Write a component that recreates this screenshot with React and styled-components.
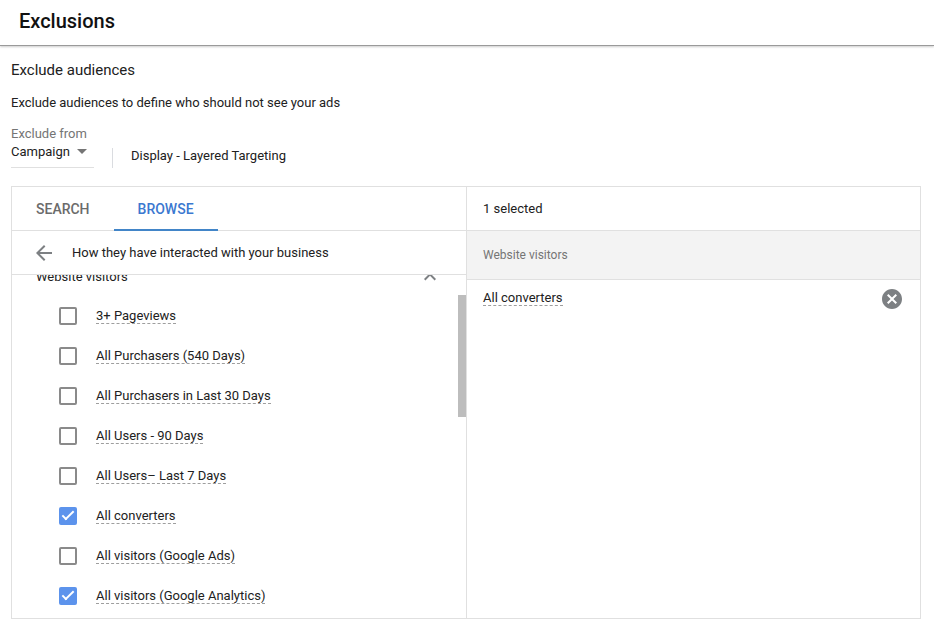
import React, { useLayoutEffect, useRef, useState } from "react";
import styled, { createGlobalStyle } from "styled-components";

const audienceList = [
  { id: "pageviews", name: "3+ Pageviews" },
  { id: "purchasers540", name: "All Purchasers (540 Days)" },
  { id: "purchasers30", name: "All Purchasers in Last 30 Days" },
  { id: "users90", name: "All Users - 90 Days" },
  { id: "users7", name: "All Users– Last 7 Days" },
  { id: "converters", name: "All converters" },
  { id: "visitorsAds", name: "All visitors (Google Ads)" },
  { id: "visitorsAnalytics", name: "All visitors (Google Analytics)" },
];

const App = () => {
  const [tab, setTab] = useState("browse");
  const [level, setLevel] = useState("Campaign");
  const [checked, setChecked] = useState(["converters", "visitorsAnalytics"]);
  const [selected, setSelected] = useState(["All converters"]);
  const listRef = useRef(null);

  // start with the group title partly scrolled under the header
  useLayoutEffect(() => {
    listRef.current.scrollTop = 19;
  }, []);

  const onToggle = (id) => {
    setChecked((prev) =>
      prev.includes(id) ? prev.filter((item) => item !== id) : [...prev, id]
    );
  };

  return (
    <>
      <GlobalStyle />
      <Header>
        <Title>Exclusions</Title>
      </Header>
      <Main>
        <SubTitle>Exclude audiences</SubTitle>
        <Description>
          Exclude audiences to define who should not see your ads
        </Description>

        <FieldLabel htmlFor="level">Exclude from</FieldLabel>
        <FieldRow>
          <SelectBox>
            <Select
              id="level"
              value={level}
              onChange={(e) => setLevel(e.target.value)}
            >
              <option>Campaign</option>
              <option>Ad group</option>
            </Select>
            <SelectArrow viewBox="0 0 10 5" aria-hidden="true">
              <path d="M0 0h10L5 5z" />
            </SelectArrow>
          </SelectBox>
          <CampaignName>Display - Layered Targeting</CampaignName>
        </FieldRow>

        <Picker>
          <BrowsePane>
            <Tabs role="tablist">
              <Tab
                type="button"
                role="tab"
                aria-selected={tab === "search"}
                $active={tab === "search"}
                onClick={() => setTab("search")}
              >
                SEARCH
              </Tab>
              <Tab
                type="button"
                role="tab"
                aria-selected={tab === "browse"}
                $active={tab === "browse"}
                onClick={() => setTab("browse")}
              >
                BROWSE
              </Tab>
            </Tabs>
            <Breadcrumb>
              <IconButton type="button" aria-label="Back">
                <Icon viewBox="0 0 24 24">
                  <path d="M20 11H7.83l5.59-5.59L12 4l-8 8 8 8 1.41-1.41L7.83 13H20v-2z" />
                </Icon>
              </IconButton>
              How they have interacted with your business
            </Breadcrumb>
            <ListArea>
              <List ref={listRef}>
                <GroupTitle>
                  Website visitors
                  <IconButton type="button" aria-label="Collapse">
                    <Icon viewBox="0 0 24 24">
                      <path d="M12 8l-6 6 1.41 1.41L12 10.83l4.59 4.58L18 14z" />
                    </Icon>
                  </IconButton>
                </GroupTitle>
                {audienceList.map((item) => (
                  <AudienceRow key={item.id}>
                    <Checkbox
                      type="checkbox"
                      checked={checked.includes(item.id)}
                      onChange={() => onToggle(item.id)}
                    />
                    <AudienceName>{item.name}</AudienceName>
                  </AudienceRow>
                ))}
              </List>
              <ScrollTrack>
                <ScrollThumb />
              </ScrollTrack>
            </ListArea>
          </BrowsePane>

          <SelectedPane>
            <SelectedCount>{selected.length} selected</SelectedCount>
            <SelectedGroup>Website visitors</SelectedGroup>
            {selected.map((name) => (
              <SelectedRow key={name}>
                <AudienceName>{name}</AudienceName>
                <IconButton
                  type="button"
                  aria-label={`Remove ${name}`}
                  onClick={() =>
                    setSelected(selected.filter((item) => item !== name))
                  }
                >
                  <Icon viewBox="0 0 24 24">
                    <path d="M12 2C6.47 2 2 6.47 2 12s4.47 10 10 10 10-4.47 10-10S17.53 2 12 2zm5 13.59L15.59 17 12 13.41 8.41 17 7 15.59 10.59 12 7 8.41 8.41 7 12 10.59 15.59 7 17 8.41 13.41 12 17 15.59z" />
                  </Icon>
                </IconButton>
              </SelectedRow>
            ))}
          </SelectedPane>
        </Picker>
      </Main>
    </>
  );
};

export default App;

const GlobalStyle = createGlobalStyle`
  * {
    box-sizing: border-box;
  }

  body {
    margin: 0;
    background-color: #fff;
    color: #212121;
    font-family: Roboto, "Liberation Sans", sans-serif;
    font-size: 13px;
    line-height: 16px;
  }

  button,
  select,
  input {
    margin: 0;
    font-family: inherit;
  }
`;

const Header = styled.header`
  height: 46px;
  padding: 9px 19px;
  border-bottom: 1px solid #9a9a9a;
  box-shadow: 0 1px 2px rgba(0, 0, 0, 0.2);
`;

const Title = styled.h1`
  margin: 0;
  color: #111;
  font-size: 20px;
  font-weight: 500;
  line-height: 24px;
`;

const Main = styled.main`
  padding: 16px 13px 12px 11px;
`;

const SubTitle = styled.h2`
  margin: 0 0 17px;
  font-size: 15px;
  font-weight: 400;
  line-height: 16px;
`;

const Description = styled.p`
  margin: 0 0 15px;
`;

const FieldLabel = styled.label`
  display: block;
  color: #757575;
`;

const FieldRow = styled.div`
  display: flex;
  align-items: flex-end;
  gap: 18px;
  margin-bottom: 18px;
`;

const SelectBox = styled.div`
  display: grid;
  align-items: center;
  width: 83px;
  height: 26px;
  padding-bottom: 6px;
  border-bottom: 1px solid #e0e0e0;
`;

const Select = styled.select`
  grid-area: 1 / 1;
  appearance: none;
  width: 100%;
  height: 18px;
  padding: 0;
  border: none;
  background: transparent;
  color: inherit;
  font-size: 13px;
`;

const SelectArrow = styled.svg`
  grid-area: 1 / 1;
  justify-self: end;
  width: 10px;
  height: 5px;
  margin-right: 7px;
  fill: #757575;
  pointer-events: none;
`;

const CampaignName = styled.div`
  height: 20px;
  padding-left: 18px;
  border-left: 1px solid #dadce0;
`;

const Picker = styled.section`
  display: grid;
  grid-template-columns: 1fr 1fr;
  border: 1px solid #e0e0e0;
`;

const BrowsePane = styled.div`
  min-width: 0;
`;

const Tabs = styled.div`
  display: flex;
  height: 44px;
  border-bottom: 1px solid #e0e0e0;
`;

const Tab = styled.button`
  height: 44px;
  padding: 2px 24px 0;
  border: none;
  border-bottom: 2px solid ${({ $active }) => ($active ? "#4285c8" : "transparent")};
  background: transparent;
  color: ${({ $active }) => ($active ? "#3b78d0" : "#6b6b6b")};
  font-size: 14px;
  font-weight: 500;
  cursor: pointer;
`;

const Breadcrumb = styled.div`
  display: flex;
  align-items: center;
  gap: 16px;
  height: 44px;
  padding-left: 20px;
  border-bottom: 1px solid #e0e0e0;
`;

const IconButton = styled.button`
  display: flex;
  padding: 0;
  border: none;
  background: transparent;
  color: #7d8083;
  cursor: pointer;
`;

const Icon = styled.svg`
  width: 24px;
  height: 24px;
  fill: currentColor;
`;

const ListArea = styled.div`
  display: flex;
  height: 343px;
`;

const List = styled.div`
  flex: 1;
  padding-bottom: 2px;
  overflow-y: auto;
  scrollbar-width: none;
`;

const GroupTitle = styled.div`
  display: flex;
  align-items: center;
  justify-content: space-between;
  height: 40px;
  padding: 2px 16px 0 24px;
`;

const AudienceRow = styled.label`
  display: flex;
  align-items: center;
  gap: 19px;
  height: 40px;
  padding-left: 47px;
`;

const Checkbox = styled.input`
  appearance: none;
  display: grid;
  place-items: center;
  width: 18px;
  height: 18px;
  border: 2px solid #8a8a8a;
  border-radius: 2px;

  &:checked {
    border-color: #5c93ec;
    background-color: #5c93ec;
  }

  &:checked::after {
    content: "";
    width: 10px;
    height: 4px;
    margin-bottom: 4px;
    border-bottom: 2px solid #fff;
    border-left: 2px solid #fff;
    transform: rotate(-45deg);
  }
`;

const AudienceName = styled.span`
  border-bottom: 1px dashed #9e9e9e;
  line-height: 15px;
`;

const ScrollTrack = styled.div`
  width: 8px;
  padding-top: 20px;
`;

const ScrollThumb = styled.div`
  height: 122px;
  background-color: #bdbdbd;
`;

const SelectedPane = styled.div`
  min-width: 0;
  border-left: 1px solid #e0e0e0;
`;

const SelectedCount = styled.div`
  height: 44px;
  padding: 14px 16px;
  border-bottom: 1px solid #e0e0e0;
`;

const SelectedGroup = styled.div`
  height: 49px;
  padding: 16px;
  border-bottom: 1px solid #e0e0e0;
  background-color: #f3f3f3;
  color: #757575;
  font-size: 12px;
`;

const SelectedRow = styled.div`
  display: flex;
  align-items: flex-start;
  justify-content: space-between;
  padding: 7px 16px;

  ${AudienceName} {
    margin-top: 3px;
  }
`;
